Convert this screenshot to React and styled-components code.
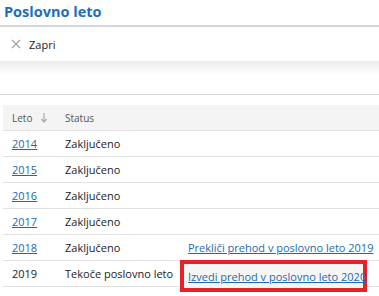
import React from "react";
import styled, { createGlobalStyle } from "styled-components";

const years = [
  { year: "2014", status: "Zaključeno", link: true },
  { year: "2015", status: "Zaključeno", link: true },
  { year: "2016", status: "Zaključeno", link: true },
  { year: "2017", status: "Zaključeno", link: true },
  { year: "2018", status: "Zaključeno", link: true, action: "Prekliči prehod v poslovno leto 2019" },
  { year: "2019", status: "Tekoče poslovno leto", link: false, action: "Izvedi prehod v poslovno leto 2020", marked: true },
];

const Global = createGlobalStyle`
  body {
    margin: 0;
    background: #fff;
    font-family: "Open Sans", "Noto Sans", sans-serif;
    color: #222;
  }
`;

const Page = styled.div`
  width: 379px;
  height: 296px;
  overflow: hidden;
`;

const Title = styled.h1`
  margin: 0;
  padding: 2px 4px 0;
  height: 23px;
  font-size: 14.5px;
  font-weight: 700;
  color: #1e6fb8;
  border-bottom: 2px solid #d6d6d6;
`;

const Toolbar = styled.div`
  display: flex;
  align-items: center;
  gap: 8px;
  height: 34px;
  padding: 0 0 0 11px;
  font-size: 11px;
`;

const Shadow = styled.div`
  height: 33px;
  background: linear-gradient(#ebebeb, #fff 14px);
  border-bottom: 1px solid #d6d6d6;
`;

const Table = styled.table`
  margin: 10px 0 0 3px;
  width: 376px;
  table-layout: fixed;
  border-collapse: collapse;
  font-size: 11px;
`;

const Head = styled.th`
  height: 25px;
  padding: 0 0 0 9px;
  background: #f4f4f4;
  color: #555;
  font-size: 10px;
  font-weight: 400;
  text-align: left;
  border-bottom: 1px solid #e2e2e2;
  width: ${(p) => p.$w || "auto"};
`;

const Cell = styled.td`
  height: 25px;
  padding: 0 0 0 ${(p) => p.$pad ?? 9}px;
  border-bottom: 1px solid #e2e2e2;
  position: relative;
  white-space: nowrap;
`;

const Link = styled.a`
  color: #1a6ab0;
  text-decoration: underline;
  cursor: pointer;
`;

const Mark = styled.div`
  position: absolute;
  left: 0;
  top: -1px;
  width: 175px;
  height: 24px;
  padding-left: 4px;
  border: 4px solid #e8202a;
  background: #f6f6f6;
  display: flex;
  align-items: center;
`;

const CloseIcon = () => (
  <svg width="10" height="10" viewBox="0 0 10 10">
    <path d="M1 1L9 9M9 1L1 9" stroke="#a8a8a8" strokeWidth="1.3" />
  </svg>
);

const SortIcon = () => (
  <svg width="8" height="10" viewBox="0 0 8 10" style={{ marginLeft: 8, verticalAlign: -1 }}>
    <path d="M4 0V8M1.5 6L4 9L6.5 6" stroke="#aaa" strokeWidth="1.2" fill="none" />
  </svg>
);

export default function App() {
  return (
    <Page>
      <Global />
      <Title>Poslovno leto</Title>
      <Toolbar>
        <CloseIcon />
        <span>Zapri</span>
      </Toolbar>
      <Shadow />
      <Table>
        <thead>
          <tr>
            <Head $w="44px">
              Leto
              <SortIcon />
            </Head>
            <Head $w="115px">Status</Head>
            <Head />
          </tr>
        </thead>
        <tbody>
          {years.map((r) => (
            <tr key={r.year}>
              <Cell>{r.link ? <Link>{r.year}</Link> : r.year}</Cell>
              <Cell>{r.status}</Cell>
              <Cell $pad={8}>
                {r.marked ? (
                  <Mark>
                    <Link>{r.action}</Link>
                  </Mark>
                ) : (
                  r.action && <Link>{r.action}</Link>
                )}
              </Cell>
            </tr>
          ))}
        </tbody>
      </Table>
    </Page>
  );
}
